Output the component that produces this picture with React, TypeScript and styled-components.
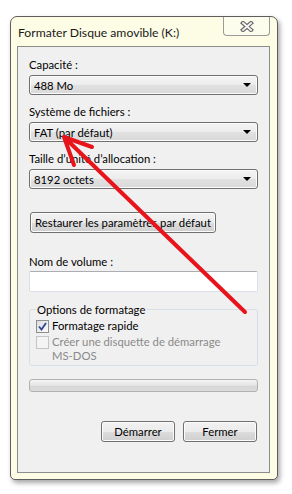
import styled, { createGlobalStyle } from "styled-components";

const GlobalStyle = createGlobalStyle`
  html, body {
    margin: 0;
    padding: 0;
    background: #ffffff;
  }
  body {
    width: 292px;
    height: 494px;
    overflow: hidden;
    font-family: Lato, "Liberation Sans", sans-serif;
    font-size: 11.3px;
    color: #000;
  }
`;

const Page = styled.div`
  position: relative;
  width: 292px;
  height: 494px;
  padding: 16px 0 0 10px;
  box-sizing: border-box;
`;

const Window = styled.div`
  width: 268px;
  height: 464px;
  box-sizing: border-box;
  display: flex;
  flex-direction: column;
  padding: 0 7px 6px 6px;
  background: #fdfde6;
  border: 1px solid #5e5e5e;
  border-radius: 7px 7px 5px 5px;
  box-shadow: 2px 3px 5px rgba(0, 0, 0, 0.35);
`;

const TitleBar = styled.div`
  height: 29px;
  display: flex;
  justify-content: space-between;
  align-items: flex-start;
`;

const Title = styled.span`
  padding: 8px 0 0 1px;
  font-size: 12.2px;
  line-height: 16px;
  color: #1a1a1a;
`;

const CloseButton = styled.div`
  width: 47px;
  height: 19px;
  box-sizing: border-box;
  display: flex;
  align-items: center;
  justify-content: center;
  background: #fdfdee;
  border: 1px solid #9a9a9a;
  border-top: none;
  border-radius: 0 0 4px 4px;
`;

const Client = styled.div`
  flex: 1;
  display: flex;
  flex-direction: column;
  padding: 10px 11px 0 11px;
  background: #f0f0f0;
  border: 1px solid #8c8c8c;
`;

const Label = styled.div<{ $top?: number }>`
  margin-top: ${p => p.$top ?? 0}px;
  line-height: 15px;
  height: 15px;
  white-space: nowrap;
`;

const Combo = styled.div`
  margin-top: 3px;
  height: 20px;
  box-sizing: border-box;
  display: flex;
  align-items: center;
  justify-content: space-between;
  padding: 0 5px 0 4px;
  border: 1px solid #707070;
  border-radius: 3px;
  background: linear-gradient(#f4f4f4, #ececec 50%, #e1e1e1 51%, #d9d9d9);
  box-shadow: inset 0 0 0 1px #fbfbfb;
`;

const Arrow = styled.span`
  width: 0;
  height: 0;
  margin-right: 1px;
  border-left: 4px solid transparent;
  border-right: 4px solid transparent;
  border-top: 4px solid #000;
`;

const Button = styled.button<{ $width: number; $top: number }>`
  width: ${p => p.$width}px;
  height: 21px;
  margin-top: ${p => p.$top}px;
  padding: 0;
  font-family: inherit;
  font-size: 11.3px;
  white-space: nowrap;
  color: #000;
  border: 1px solid #707070;
  border-radius: 3px;
  background: linear-gradient(#f2f2f2, #ebebeb 50%, #dddddd 51%, #cfcfcf);
  box-shadow: inset 0 0 0 1px #fcfcfc;
`;

const RestoreButton = styled(Button)`
  align-self: flex-start;
  margin-left: 1px;
`;

const TextBox = styled.div`
  margin-top: 2px;
  height: 21px;
  box-sizing: border-box;
  background: #fff;
  border: 1px solid #dbdfe6;
  border-top-color: #abadb3;
  border-radius: 2px;
`;

const Group = styled.fieldset`
  margin: 10px 0 0;
  padding: 0 6px 2px 6px;
  border: 1px solid #d5dfe5;
  border-radius: 3px;
`;

const Legend = styled.legend`
  padding: 0 2px 0 1px;
  line-height: 15px;
`;

const CheckRow = styled.div<{ $disabled?: boolean; $top: number }>`
  display: flex;
  align-items: flex-start;
  margin-top: ${p => p.$top}px;
  line-height: 14px;
  color: ${p => (p.$disabled ? "#8a8a8a" : "#000")};
`;

const Lines = styled.span`
  display: flex;
  flex-direction: column;
`;

const Box = styled.span<{ $disabled?: boolean }>`
  flex: none;
  width: 13px;
  height: 13px;
  box-sizing: border-box;
  margin: 1px 3px 0 0;
  display: flex;
  align-items: center;
  justify-content: center;
  border: 1px solid ${p => (p.$disabled ? "#c4c4c4" : "#8e8f8f")};
  background: ${p =>
    p.$disabled
      ? "#f4f4f4"
      : "linear-gradient(135deg, #dcdcdc, #fbfbfb)"};
`;

const Progress = styled.div`
  margin-top: 13px;
  height: 13px;
  box-sizing: border-box;
  border: 1px solid #b2b2b2;
  border-radius: 3px;
  background: linear-gradient(#f5f5f5, #e3e3e3 50%, #d6d6d6 51%, #dcdcdc);
`;

const Footer = styled.div`
  display: flex;
  justify-content: flex-end;
  gap: 8px;
  padding-right: 1px;
`;

const Overlay = styled.svg`
  position: absolute;
  left: 0;
  top: 0;
  pointer-events: none;
`;

function CloseGlyph() {
  return (
    <svg width="14" height="11" viewBox="0 0 14 11">
      <path d="M3 2 L11 9 M11 2 L3 9" stroke="#6a6a6a" strokeWidth="4.2" strokeLinecap="square" />
      <path d="M3 2 L11 9 M11 2 L3 9" stroke="#f6f6f6" strokeWidth="1.8" strokeLinecap="square" />
    </svg>
  );
}

function CheckMark() {
  return (
    <svg width="9" height="9" viewBox="0 0 9 9">
      <path d="M1 4.5 L3.5 7.5 L8 1" fill="none" stroke="#2d4694" strokeWidth="1.8" />
    </svg>
  );
}

function Field({ label, value, top }: { label: string; value: string; top?: number }) {
  return (
    <>
      <Label $top={top}>{label}</Label>
      <Combo>
        <span>{value}</span>
        <Arrow />
      </Combo>
    </>
  );
}

export default function App() {
  return (
    <Page>
      <GlobalStyle />
      <Window>
        <TitleBar>
          <Title>Formater Disque amovible (K:)</Title>
          <CloseButton>
            <CloseGlyph />
          </CloseButton>
        </TitleBar>
        <Client>
          <Field label="Capacité :" value="488 Mo" />
          <Field label="Système de fichiers :" value="FAT (par défaut)" top={9} />
          <Field label="Taille d’unité d’allocation :" value="8192 octets" top={9} />
          <RestoreButton $width={186} $top={23}>
            Restaurer les paramètres par défaut
          </RestoreButton>
          <Label $top={21}>Nom de volume :</Label>
          <TextBox />
          <Group>
            <Legend>Options de formatage</Legend>
            <CheckRow $top={2}>
              <Box>
                <CheckMark />
              </Box>
              Formatage rapide
            </CheckRow>
            <CheckRow $top={2} $disabled>
              <Box $disabled />
              <Lines>
                <span>Créer une disquette de démarrage</span>
                <span>MS-DOS</span>
              </Lines>
            </CheckRow>
          </Group>
          <Progress />
          <Footer>
            <Button $width={74} $top={29}>Démarrer</Button>
            <Button $width={74} $top={29}>Fermer</Button>
          </Footer>
        </Client>
      </Window>
      <Overlay width="292" height="494" viewBox="0 0 292 494">
        <path
          d="M245 312 L66 139 M64 137 L74 165 M64 137 L92 147"
          fill="none"
          stroke="#e8141b"
          strokeWidth="4"
          strokeLinecap="round"
          strokeLinejoin="round"
        />
      </Overlay>
    </Page>
  );
}
